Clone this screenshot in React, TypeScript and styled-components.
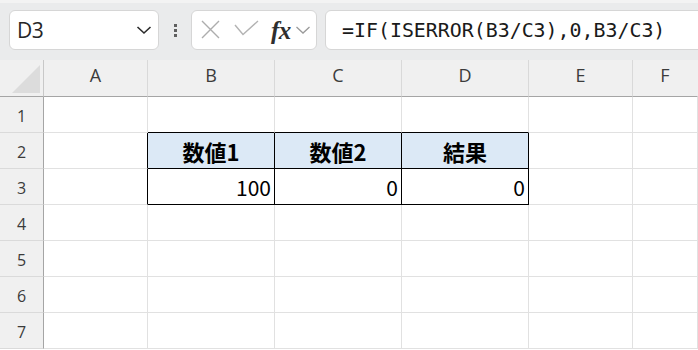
import React from "react";
import styled, { createGlobalStyle } from "styled-components";

const Global = createGlobalStyle`
  html, body { margin: 0; padding: 0; background: #ffffff; }
  body { width: 698px; height: 350px; overflow: hidden; font-family: "Noto Sans", "Noto Sans CJK JP", sans-serif; }
  * { box-sizing: border-box; }
`;

const Page = styled.div`
  width: 698px;
  height: 350px;
  overflow: hidden;
  display: flex;
  flex-direction: column;
`;

const Toolbar = styled.div`
  height: 60px;
  flex: none;
  display: flex;
  align-items: center;
  padding: 0 0 0 9px;
  background: linear-gradient(#f3f3f3 0, #f3f3f3 3px, #eaebec 3px);
  overflow: hidden;
`;

const Box = styled.div<{ $w?: number }>`
  height: 40px;
  background: #ffffff;
  border: 1px solid #d6d6d6;
  border-radius: 6px;
  display: flex;
  align-items: center;
  flex: none;
  ${(p) => (p.$w ? `width: ${p.$w}px;` : "")}
`;

const NameBox = styled(Box)`
  padding: 0 6px 0 7px;
  justify-content: space-between;
`;

const NameText = styled.span`
  font-family: "Open Sans", "Noto Sans", sans-serif;
  font-size: 21px;
  color: #262626;
  letter-spacing: -0.5px;
`;

const Grip = styled.div`
  width: 32px;
  flex: none;
  display: flex;
  flex-direction: column;
  align-items: center;
  gap: 2px;
`;

const GripDot = styled.span`
  width: 3px;
  height: 3px;
  background: #5f5f5f;
`;

const FxBox = styled(Box)`
  padding: 0 0 0 9px;
`;

const FxText = styled.span`
  font-family: "Liberation Serif", serif;
  font-style: italic;
  font-weight: 700;
  font-size: 25px;
  color: #2e2e2e;
  margin: 2px 4px 0 11px;
  letter-spacing: -0.5px;
`;

const FormulaBox = styled(Box)`
  flex: 1;
  margin-left: 8px;
  margin-right: -12px;
  padding-left: 16px;
`;

const FormulaText = styled.span`
  font-family: "DejaVu Sans Mono", "Liberation Mono", monospace;
  font-size: 19.9px;
  color: #1a1a1a;
  white-space: nowrap;
`;

const Sheet = styled.div`
  display: grid;
  grid-template-columns: 44px 104px 127px 127px 127px 104px 1fr;
  grid-template-rows: 37px repeat(7, 36px);
  flex: none;
`;

const Corner = styled.div`
  background: #f0f0f0;
  border-right: 1px solid #c8c8c8;
  border-bottom: 1px solid #a5a5a5;
  display: flex;
  align-items: flex-end;
  justify-content: flex-end;
  padding: 0 3px 3px 0;
`;

const ColHead = styled.div<{ $last?: boolean }>`
  background: #f0f0f0;
  border-right: 1px solid ${(p) => (p.$last ? "transparent" : "#d9d9d9")};
  border-bottom: 1px solid #a5a5a5;
  display: flex;
  justify-content: center;
  align-items: flex-start;
  padding-top: 3px;
  font-family: "Open Sans", "Noto Sans", sans-serif;
  font-size: 18px;
  color: #3b3b3b;
`;

const RowHead = styled.div`
  background: #f0f0f0;
  border-right: 1px solid #a5a5a5;
  border-bottom: 1px solid #dadada;
  display: flex;
  justify-content: center;
  align-items: center;
  padding-top: 3px;
  font-family: "Open Sans", "Noto Sans", sans-serif;
  font-size: 16px;
  color: #3b3b3b;
`;

const Cell = styled.div<{ $r?: boolean; $b?: boolean; $fill?: boolean; $head?: boolean }>`
  border-right: 1px solid ${(p) => (p.$r ? "#000000" : "#e1e1e1")};
  border-bottom: 1px solid ${(p) => (p.$b ? "#000000" : "#e1e1e1")};
  background: ${(p) => (p.$fill ? "#dce9f6" : "#ffffff")};
  display: flex;
  align-items: center;
  justify-content: ${(p) => (p.$head ? "center" : "flex-end")};
  padding: 1px 3px 0 3px;
  font-family: "Noto Sans CJK JP", "Noto Sans", sans-serif;
  font-size: ${(p) => (p.$head ? "22px" : "21px")};
  font-weight: ${(p) => (p.$head ? 700 : 400)};
  color: #000000;
  white-space: nowrap;
  overflow: hidden;
`;

const cols = ["A", "B", "C", "D", "E", "F"];

type CellDef = { text?: string; head?: boolean; fill?: boolean; r?: boolean; b?: boolean };

const data: Record<number, Record<string, CellDef>> = {
  1: { B: { b: true }, C: { b: true }, D: { b: true } },
  2: {
    A: { r: true },
    B: { text: "数値1", head: true, fill: true, r: true, b: true },
    C: { text: "数値2", head: true, fill: true, r: true, b: true },
    D: { text: "結果", head: true, fill: true, r: true, b: true },
  },
  3: {
    A: { r: true },
    B: { text: "100", r: true, b: true },
    C: { text: "0", r: true, b: true },
    D: { text: "0", r: true, b: true },
  },
};

const Chevron = ({ color, w }: { color: string; w: number }) => (
  <svg width="16" height="10" viewBox="0 0 16 10">
    <path d="M1.5 2 L8 8 L14.5 2" fill="none" stroke={color} strokeWidth={w} />
  </svg>
);

export default function App() {
  return (
    <Page>
      <Global />
      <Toolbar>
        <NameBox $w={150}>
          <NameText>D3</NameText>
          <Chevron color="#2b2b2b" w={1.6} />
        </NameBox>
        <Grip>
          <GripDot />
          <GripDot />
          <GripDot />
        </Grip>
        <FxBox $w={126}>
          <svg width="20" height="20" viewBox="0 0 20 20">
            <path d="M1 1 L18 18 M18 1 L1 18" stroke="#adadad" strokeWidth="1.4" fill="none" />
          </svg>
          <svg width="26" height="20" viewBox="0 0 26 20" style={{ marginLeft: 13 }}>
            <path d="M1 5 L9 14.5 L24 1" stroke="#b3b3b3" strokeWidth="1.4" fill="none" />
          </svg>
          <FxText>fx</FxText>
          <Chevron color="#9a9a9a" w={1.3} />
        </FxBox>
        <FormulaBox>
          <FormulaText>=IF(ISERROR(B3/C3),0,B3/C3)</FormulaText>
        </FormulaBox>
      </Toolbar>
      <Sheet>
        <Corner>
          <svg width="28" height="28" viewBox="0 0 28 28">
            <path d="M28 0 L28 28 L0 28 Z" fill="#dcdcdc" />
          </svg>
        </Corner>
        {cols.map((c, i) => (
          <ColHead key={c} $last={i === cols.length - 1}>
            {c}
          </ColHead>
        ))}
        {[1, 2, 3, 4, 5, 6, 7].map((row) => (
          <React.Fragment key={row}>
            <RowHead>{row}</RowHead>
            {cols.map((c) => {
              const d = data[row]?.[c] ?? {};
              return (
                <Cell key={c} $r={d.r} $b={d.b} $fill={d.fill} $head={d.head}>
                  {d.text}
                </Cell>
              );
            })}
          </React.Fragment>
        ))}
      </Sheet>
    </Page>
  );
}
